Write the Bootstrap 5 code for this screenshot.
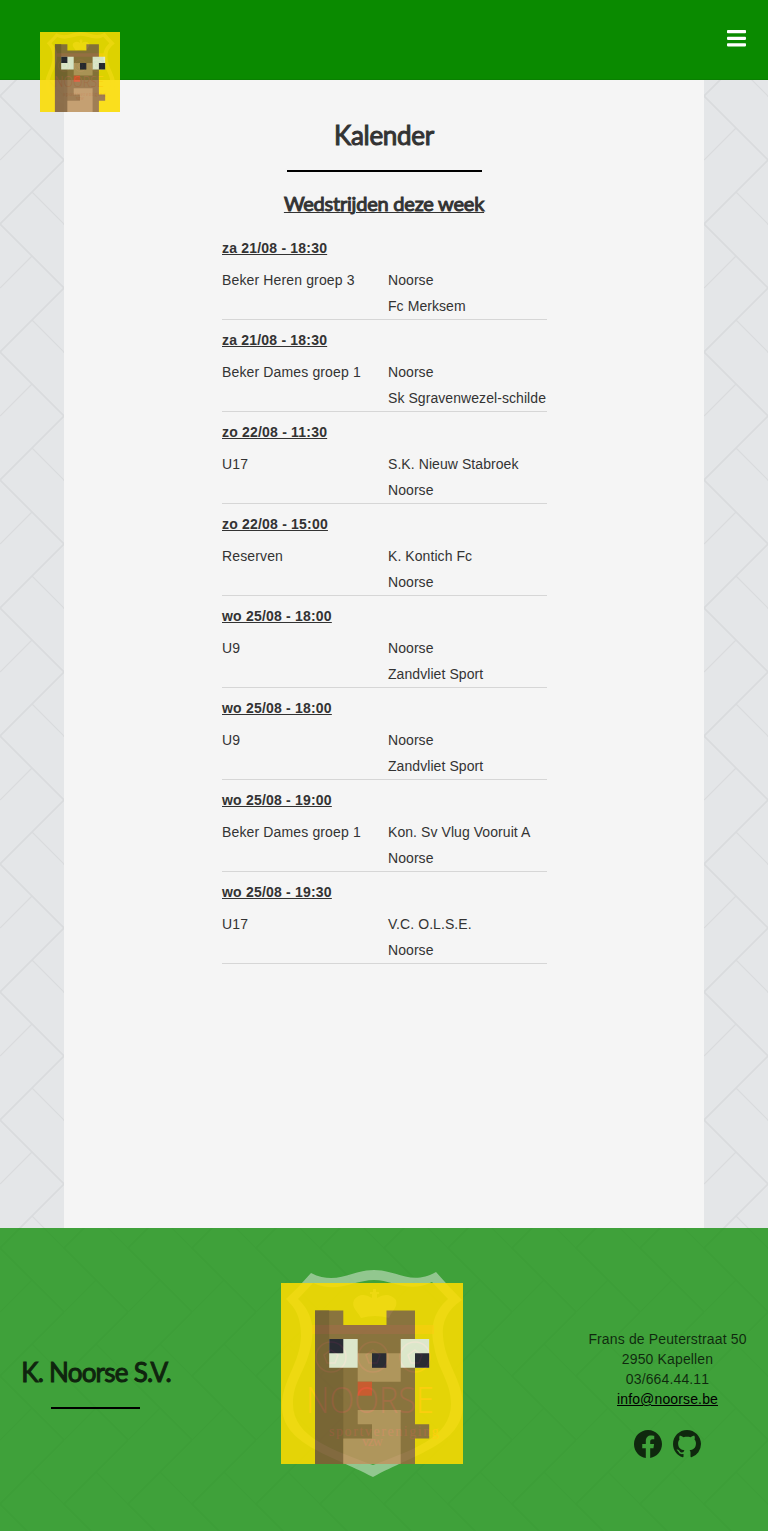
<!DOCTYPE html>
<html lang="nl">
<head>
<meta charset="utf-8">
<meta name="viewport" content="width=device-width, initial-scale=1">
<title>K. Noorse S.V. - Kalender</title>
<link href="https://cdn.jsdelivr.net/npm/bootstrap@5.3.0/dist/css/bootstrap.min.css" rel="stylesheet">
<style>
body{font-family:"Liberation Sans",Arial,sans-serif;font-size:14px;line-height:20px;letter-spacing:.14px;color:#333;
background:#e4e6e8 url("data:image/svg+xml,%3Csvg xmlns='http://www.w3.org/2000/svg' width='64' height='128' fill='none' stroke='%23d9dbdd'%3E%3Cpath stroke-width='1.7' d='M-2-2L64 64L-2 130M62-2L66 2M62 130L66 126M66 62L62 66'/%3E%3Cpath stroke-width='1.2' d='M32 32L0 64M32 96L64 128'/%3E%3C/svg%3E") 0 96px}
.site-header{height:80px;background:#0a8a00;border-bottom:1px solid #098000}
.brand{margin:32px 0 0 40px;width:80px;height:80px;z-index:2}
.toggler{margin:30px 21px 0 0;width:20px;height:17px}
.page{width:640px;height:1148px;background:#f5f5f5;padding-top:39px}
h1,h2,h3{font-family:Lato,sans-serif;font-weight:400;margin:0;-webkit-text-stroke:1px currentColor}
.title{font-size:26px;line-height:32px;letter-spacing:-.3px}
.subtitle{font-size:20px;line-height:24px;letter-spacing:-.22px;margin:19px 0 13px;text-decoration:underline;text-decoration-thickness:1px}
.rule{height:2px;background:#000;margin-top:19px}
.matches{width:325px}
.match{height:92px;border-bottom:1px solid #d6d6d6;padding:10px 0 0 .5px}
.when{font-weight:700;text-decoration:underline;margin-bottom:9px;letter-spacing:.2px}
.match .group{width:166px;letter-spacing:.14px}
.match .teams{letter-spacing:.07px}
.match .row-line{line-height:26px}
.site-footer{height:303px;background:rgba(8,138,0,.75);color:rgba(0,0,0,.75)}
.club{width:192px;padding-top:128px}
.club .title{letter-spacing:-.75px;color:#0f240e}
.club .rule{width:89px;margin-left:51px}
.crest{margin:42px 0 0 89px;width:182px;height:207px}
.contact{margin:101px 21px 0 auto;width:159px}
.contact a{color:#000}
.phone{font-kerning:none}
.social{gap:11px;margin:21px 0 0 -1px}
</style>
</head>
<body>
<header class="site-header d-flex justify-content-between align-items-start">
<svg class="brand position-relative flex-shrink-0" viewBox="0 0 182 182"><use href="#shield" transform="translate(11 0) scale(.879)"/><use href="#bear" transform="scale(1 1.0055)"/></svg>
<svg class="toggler" viewBox="0 0 20 17" fill="#fff"><rect width="19" height="3.2" rx=".8"/><rect y="6.7" width="19" height="3.2" rx=".8"/><rect y="13.2" width="19" height="3.2" rx=".8"/></svg>
</header>
<main class="page mx-auto text-center">
<h1 class="title">Kalender</h1>
<div class="rule mx-auto" style="width:195px"></div>
<h2 class="subtitle">Wedstrijden deze week</h2>
<div class="matches mx-auto text-start" id="matches"></div>
</main>
<footer class="site-footer d-flex align-items-start">
<div class="club text-center"><h3 class="title">K. Noorse S.V.</h3><div class="rule"></div></div>
<svg class="crest flex-shrink-0" viewBox="0 0 182 207">
<defs>
<g id="shield">
<path fill="#f5f5f5" fill-opacity=".46" fill-rule="evenodd" d="M30 3C56 16 70 0 93 0C116 0 130 16 155 2Q168 17 181 30Q160 44 162 66C164 94 182 110 182 136C181 174 134 184 92 207C48 184 1 174 1 136C1 110 19 94 20 66C20 44 12 36 5 29Q18 17 30 3ZM32 13L17 29C33 44 33 61 30 76C24 103 12 111 12 134C12 168 55 181 92 195C129 181 170 168 170 134C170 111 157 101 153 76C149 59 152 42 167 29L151 12C128 24 112 10 93 10C73 10 57 24 32 13Z"/>
<path fill="#f76a8a" fill-opacity=".6" d="M31 55H153V64H31z"/>
<g fill="none" stroke="#f98" stroke-opacity=".7" stroke-width="1.5">
<circle cx="50" cy="87" r="15"/><circle cx="92" cy="87" r="15"/><circle cx="134" cy="87" r="15"/>
<path d="M50 80l7 5-3 8h-8l-3-8zM92 80l7 5-3 8h-8l-3-8zM134 80l7 5-3 8h-8l-3-8z"/>
</g>
<path fill="#fff" fill-opacity=".45" d="M80 48C76 40 70 38 73 30Q80 21 91 28V24H89V22H92V19H95V22H98V24H96V28Q107 21 115 30C117 38 111 40 108 48Q94 44 80 48Z"/>
<text x="25" y="143" font-family="Open Sans,sans-serif" font-weight="300" font-size="36" textLength="128" lengthAdjust="spacingAndGlyphs" fill="#ff7878">NOORSE</text>
<g font-family="Liberation Serif,serif" font-size="14" fill="#ff7878"><text x="48" y="166" textLength="110">sportvereniging</text><text x="81" y="176" textLength="21">vzw</text></g>
</g>
<g id="bear" opacity=".88">
<path fill="#fbdc00" d="M0 0H182V181H0z"/>
<path fill="#946e3f" d="M34 27.500H62.300V42H105.500V27.500H134V141.200H148.200V155.500H134V181H34z"/>
<path fill="#805e35" d="M34 27.500H48.200V84.700H62.300V181H34z"/>
<path fill="#bf9561" d="M76.700 70.300H91V84.700H105.300V70.300H119.700V98.700H76.700zM76.700 127H119.700V181H62.300V155.500H91V141.200H76.700z"/>
<path fill="#f2f1df" d="M48.200 56H76.700V84.700H48.200zM119.700 56H148.200V84.700H119.700z"/>
<path fill="#271c33" d="M48.200 56H62.300V70.300H48.200zM91 70.300H105.300V84.700H91zM134 70.300H148.200V84.700H134z"/>
<path fill="#db532f" d="M76.700 98.700H91V112.700H76.700z"/>
</g>
</defs>
<use href="#shield"/><use href="#bear" y="13"/>
</svg>
<div class="contact text-center">Frans de Peuterstraat 50<br>2950 Kapellen<br><span class="phone">03/664.44.11</span><br><a href="#">info@noorse.be</a>
<div class="social d-flex justify-content-center">
<svg width="28" height="28" viewBox="0 0 16 16" fill="currentColor"><path d="M16 8.049c0-4.446-3.582-8.05-8-8.05C3.58 0-.002 3.603-.002 8.05c0 4.017 2.926 7.347 6.75 7.951v-5.625h-2.03V8.050H6.750V6.275c0-2.017 1.195-3.131 3.022-3.131.876 0 1.791.157 1.791.157v1.980h-1.009c-.993 0-1.303.621-1.303 1.258v1.510h2.218l-.354 2.326H9.250V16c3.824-.604 6.750-3.934 6.750-7.951z"/></svg>
<svg width="28" height="28" viewBox="0 0 16 16" fill="currentColor"><path d="M8 0C3.580 0 0 3.580 0 8c0 3.540 2.290 6.530 5.470 7.590.4.070.550-.170.550-.380 0-.190-.010-.820-.010-1.490-2.010.370-2.530-.490-2.690-.940-.090-.230-.480-.940-.820-1.130-.280-.150-.680-.520-.010-.530.630-.010 1.080.580 1.230.820.720 1.210 1.870.870 2.330.660.070-.520.280-.870.510-1.070-1.780-.2-3.640-.890-3.640-3.950 0-.870.310-1.590.820-2.150-.080-.2-.360-1.020.080-2.120 0 0 .670-.210 2.200.820.640-.180 1.320-.270 2-.270.680 0 1.360.090 2 .270 1.530-1.040 2.200-.820 2.200-.820.440 1.100.160 1.920.080 2.120.510.560.820 1.270.820 2.150 0 3.070-1.870 3.750-3.650 3.950.290.250.540.730.540 1.480 0 1.070-.010 1.930-.010 2.200 0 .210.150.460.550.380A8.012 8.012 0 0 0 16 8c0-4.420-3.580-8-8-8z"/></svg>
</div></div>
</footer>
<script>
document.getElementById('matches').innerHTML=[['za 21/08 - 18:30','Beker Heren groep 3','Noorse','Fc Merksem'],['za 21/08 - 18:30','Beker Dames groep 1','Noorse','Sk Sgravenwezel-schilde'],['zo 22/08 - 11:30','U17','S.K. Nieuw Stabroek','Noorse'],['zo 22/08 - 15:00','Reserven','K. Kontich Fc','Noorse'],['wo 25/08 - 18:00','U9','Noorse','Zandvliet Sport'],['wo 25/08 - 18:00','U9','Noorse','Zandvliet Sport'],['wo 25/08 - 19:00','Beker Dames groep 1','Kon. Sv Vlug Vooruit A','Noorse'],['wo 25/08 - 19:30','U17','V.C. O.L.S.E.','Noorse']].map(m=>`<div class="match"><div class="when">${m[0]}</div><div class="d-flex row-line"><div class="group flex-shrink-0">${m[1]}</div><div class="teams text-nowrap">${m[2]}<br>${m[3]}</div></div></div>`).join('');
</script>
<script src="https://cdn.jsdelivr.net/npm/bootstrap@5.3.0/dist/js/bootstrap.bundle.min.js"></script>
</body>
</html>
